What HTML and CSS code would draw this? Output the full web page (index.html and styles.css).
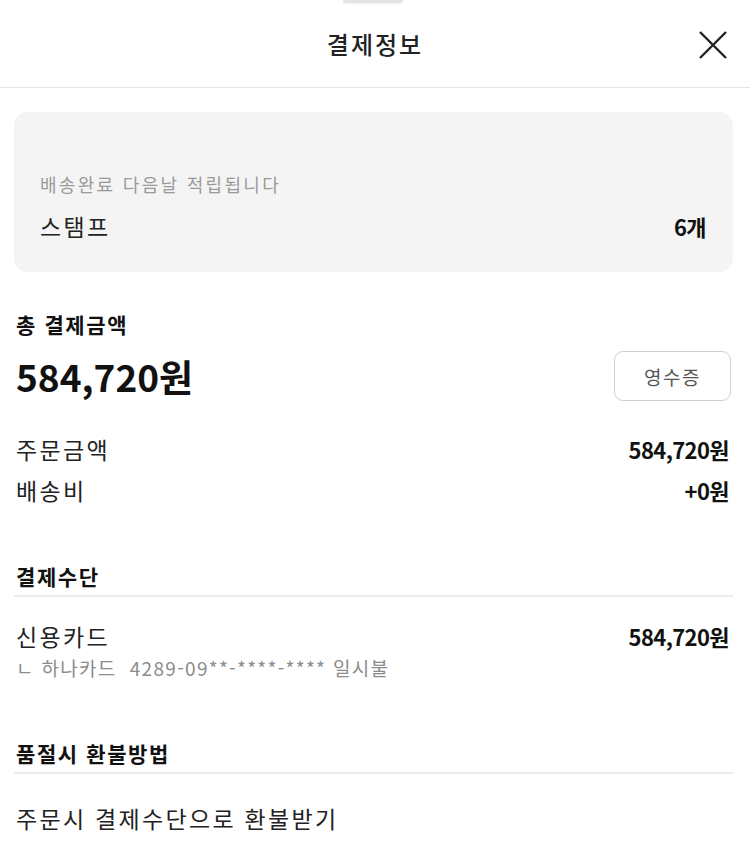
FILE: index.html
```html
<!DOCTYPE html>
<html lang="ko">
<head>
<meta charset="utf-8">
<title>결제정보</title>
<link rel="stylesheet" href="styles.css">
</head>
<body>
<div class="sheet">
  <div class="handle"></div>
  <header class="header">
    <span></span>
    <h1 class="title">결제정보</h1>
    <button class="close" aria-label="닫기">
      <svg width="30" height="30" viewBox="0 0 30 30"><path d="M2 2 L28 28 M28 2 L2 28" stroke="#222" stroke-width="2.4" fill="none"/></svg>
    </button>
  </header>
  <main class="content">
    <section class="card">
      <p class="card-caption">배송완료 다음날 적립됩니다</p>
      <div class="row card-row">
        <span class="label">스탬프</span>
        <span class="value">6개</span>
      </div>
    </section>

    <section class="total">
      <h2 class="section-title">총 결제금액</h2>
      <div class="total-row">
        <span class="total-amount">584,720원</span>
        <button class="receipt">영수증</button>
      </div>
      <div class="row first">
        <span class="label">주문금액</span>
        <span class="value">584,720원</span>
      </div>
      <div class="row">
        <span class="label">배송비</span>
        <span class="value">+0원</span>
      </div>
    </section>

    <section class="block">
      <h2 class="section-title ruled">결제수단</h2>
      <div class="row first">
        <span class="label">신용카드</span>
        <span class="value">584,720원</span>
      </div>
      <p class="sub">ㄴ 하나카드 &nbsp;4289-09**-****-**** 일시불</p>
    </section>

    <section class="block refund">
      <h2 class="section-title ruled">품절시 환불방법</h2>
      <p class="label plain">주문시 결제수단으로 환불받기</p>
    </section>
  </main>
</div>
</body>
</html>
```

FILE: styles.css
```css
* { box-sizing: border-box; }
html, body { margin: 0; padding: 0; background: #fff; }
body {
  font-family: "Noto Sans CJK KR", "Noto Sans", sans-serif;
  color: #222;
  width: 750px;
}
.sheet { display: flex; flex-direction: column; }
.handle {
  align-self: center;
  width: 60px;
  height: 3px;
  background: #e4e4e4;
  border-radius: 0 0 3px 3px;
  box-shadow: 0 1px 2px rgba(0,0,0,0.06);
  margin-left: -4px;
}
.header {
  height: 85px;
  display: grid;
  grid-template-columns: 1fr auto 1fr;
  align-items: center;
  border-bottom: 1px solid #e6e6e6;
}
.title {
  margin: 0;
  font-size: 24px;
  font-weight: 500;
  color: #222;
  letter-spacing: 2px;
  line-height: 30px;
  margin-top: -3px;
}
.close {
  justify-self: end;
  margin-right: 22px;
  background: none;
  border: 0;
  padding: 0;
  width: 30px;
  height: 30px;
  display: flex;
}
.content {
  padding: 24px 17px 40px 14px;
  display: flex;
  flex-direction: column;
}
.card {
  background: #f4f4f4;
  border-radius: 14px;
  padding: 61px 27px 32px 26px;
  height: 160px;
}
.card-caption {
  margin: 0;
  font-size: 18px;
  line-height: 22px;
  color: #9a9a9a;
  letter-spacing: 2.3px;
}
.row {
  display: flex;
  justify-content: space-between;
  align-items: center;
  height: 28px;
  padding: 0 4px 0 2px;
  margin-top: 13px;
}
.card-row { margin-top: 17px; padding: 0; }
.label {
  font-size: 23px;
  color: #222;
  letter-spacing: 2.3px;
}
.value {
  font-size: 22px;
  font-weight: 700;
  color: #111;
  letter-spacing: -0.6px;
}
.total { margin-top: 39px; }
.section-title {
  margin: 0;
  padding-left: 2px;
  font-size: 21px;
  font-weight: 700;
  line-height: 26px;
  color: #111;
  letter-spacing: 1.6px;
}
.total-row {
  margin-top: 14px;
  display: flex;
  justify-content: space-between;
  align-items: center;
  padding: 0 2px;
  height: 50px;
}
.total-amount {
  font-size: 37px;
  font-weight: 700;
  color: #111;
  letter-spacing: 0;
}
.receipt {
  width: 117px;
  height: 50px;
  border: 1px solid #cfcfcf;
  border-radius: 9px;
  background: #fff;
  font-family: inherit;
  font-size: 19px;
  letter-spacing: 1.5px;
  color: #555;
}
.row.first { margin-top: 34px; }
.block { margin-top: 59px; }
.block .row.first { margin-top: 25px; }
.ruled {
  padding-bottom: 6px;
  border-bottom: 2px solid #ececec;
}
.sub {
  margin: 6px 0 0;
  padding-left: 2px;
  font-size: 19px;
  line-height: 24px;
  color: #8c8c8c;
  letter-spacing: 1.3px;
}
.refund { margin-top: 60px; }
.plain {
  margin: 30px 0 0;
  padding-left: 2px;
  line-height: 28px;
}
```
